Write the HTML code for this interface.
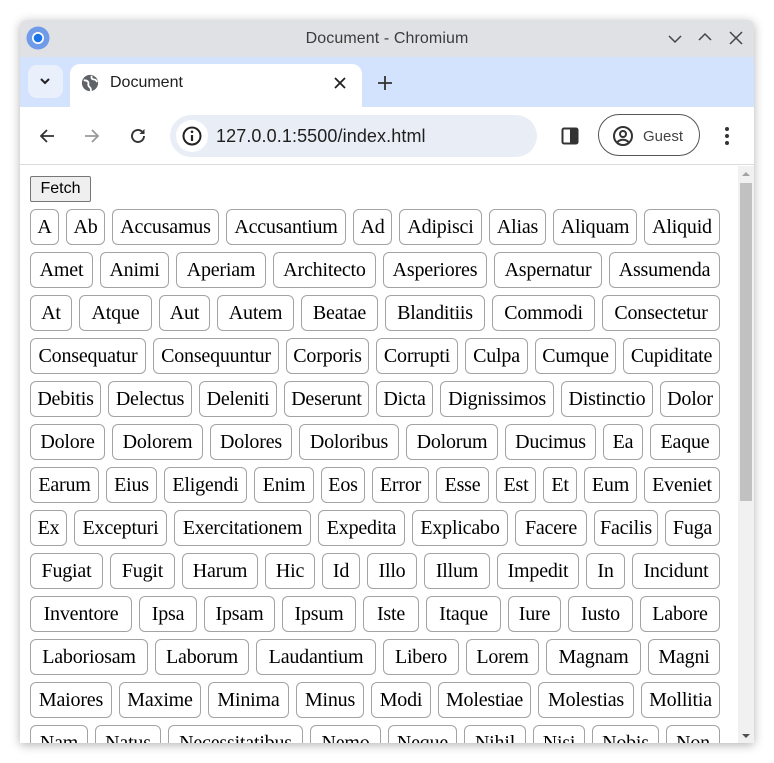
<!DOCTYPE html>
<html><head><meta charset="utf-8"><style>
*{margin:0;padding:0;box-sizing:border-box}
body{width:774px;height:763px;background:#fff;position:relative;overflow:hidden;font-family:"Liberation Sans",sans-serif}
.win{position:absolute;left:20px;top:20px;width:734px;height:723px;background:#fff;box-shadow:0 2px 10px rgba(0,0,0,.3);border-radius:6px 6px 0 0;overflow:hidden}
.title{position:absolute;left:0;top:0;width:734px;height:37px;background:#dfe1e5}
.tabs{position:absolute;left:0;top:37px;width:734px;height:50px;background:#d3e3fd}
.toolbar{position:absolute;left:0;top:87px;width:734px;height:58px;background:#fff;border-radius:8px 8px 0 0;border-bottom:1px solid #dadce0}
.content{position:absolute;left:0;top:146px;width:734px;height:577px;overflow:hidden;background:#fff}
.b{position:absolute;height:36px;border:1px solid #a3a3a3;border-radius:6px;background:#fff;font-family:"Liberation Serif",serif;font-size:20px;color:#000;display:flex;align-items:center;justify-content:center;white-space:nowrap;letter-spacing:-.2px}
.r{position:absolute;left:0;width:720px;height:36px}
</style></head><body>
<div class="win">
 <div class="title">
  <svg style="position:absolute;left:6px;top:6px" width="24" height="24" viewBox="0 0 24 24"><circle cx="12" cy="12" r="11.5" fill="#6f9be8"/><circle cx="12" cy="12" r="6" fill="#fff"/><circle cx="12" cy="12" r="4.3" fill="#1a73e8"/></svg>
  <div style="position:absolute;left:0;width:734px;top:10px;text-align:center;font-size:16px;color:#3c3c3c;letter-spacing:.1px">Document - Chromium</div>
  <svg style="position:absolute;left:648px;top:12px" width="14" height="14" viewBox="0 0 14 14"><path d="M1 4l6 6 6-6" stroke="#444" stroke-width="1.5" fill="none"/></svg>
  <svg style="position:absolute;left:678px;top:10px" width="14" height="14" viewBox="0 0 14 14"><path d="M1 10l6-6 6 6" stroke="#444" stroke-width="1.5" fill="none"/></svg>
  <svg style="position:absolute;left:709px;top:11px" width="14" height="14" viewBox="0 0 14 14"><path d="M1 1l12 12M13 1L1 13" stroke="#444" stroke-width="1.5" fill="none"/></svg>
 </div>
 <div class="tabs">
  <div style="position:absolute;left:8px;top:8px;width:35px;height:33px;background:#e9effb;border-radius:9px"></div>
  <svg style="position:absolute;left:19px;top:19px" width="12" height="10" viewBox="0 0 12 10"><path d="M2 3l4 4 4-4" stroke="#222" stroke-width="2" fill="none"/></svg>
  <div style="position:absolute;left:50px;top:7px;width:292px;height:50px;background:#fff;border-radius:10px 10px 0 0"></div>
  <svg style="position:absolute;left:61px;top:17px" width="18" height="18" viewBox="0 0 20 20"><circle cx="10" cy="10" r="9" fill="#5f6368"/><path d="M3 7c2 0 4 0 5 2s-1 3 1 5 2 2 2 5M12 2c-1 2 0 4 2 4s3 1 4 3" stroke="#fff" stroke-width="2" fill="none"/></svg>
  <div style="position:absolute;left:90px;top:17px;font-size:16px;color:#1f1f1f">Document</div>
  <svg style="position:absolute;left:314px;top:20px" width="12" height="12" viewBox="0 0 12 12"><path d="M1 1l10 10M11 1L1 11" stroke="#222" stroke-width="1.8"/></svg>
  <svg style="position:absolute;left:357px;top:18px" width="16" height="16" viewBox="0 0 16 16"><path d="M8 1v14M1 8h14" stroke="#333" stroke-width="1.8"/></svg>
 </div>
 <div class="toolbar">
  <svg style="position:absolute;left:18px;top:20px" width="18" height="18" viewBox="0 0 18 18"><path d="M16 9H3M9 3L3 9l6 6" stroke="#333" stroke-width="1.8" fill="none"/></svg>
  <svg style="position:absolute;left:63px;top:20px" width="18" height="18" viewBox="0 0 18 18"><path d="M2 9h13M9 3l6 6-6 6" stroke="#999" stroke-width="1.8" fill="none"/></svg>
  <svg style="position:absolute;left:108px;top:19px" width="20" height="20" viewBox="0 0 20 20"><path d="M16 10a6 6 0 1 1-2-4.5" stroke="#333" stroke-width="1.9" fill="none"/><path d="M16.5 3v5h-5z" fill="#333"/></svg>
  <div style="position:absolute;left:150px;top:8px;width:367px;height:42px;background:#e9eef6;border-radius:21px"></div>
  <div style="position:absolute;left:156px;top:13px;width:32px;height:32px;background:#fff;border-radius:16px"></div>
  <svg style="position:absolute;left:161px;top:18px" width="22" height="22" viewBox="0 0 22 22"><circle cx="11" cy="11" r="8.5" stroke="#222" stroke-width="2" fill="none"/><path d="M11 10v6" stroke="#222" stroke-width="2.2"/><circle cx="11" cy="6.8" r="1.3" fill="#222"/></svg>
  <div style="position:absolute;left:196px;top:19px;font-size:18px;color:#1f1f1f;letter-spacing:.1px">127.0.0.1:5500/index.html</div>
  <svg style="position:absolute;left:541px;top:20px" width="18" height="18" viewBox="0 0 18 18"><rect x="1.5" y="1.5" width="15" height="15" rx="1.5" stroke="#333" stroke-width="2" fill="none"/><rect x="9" y="1.5" width="7.5" height="15" fill="#333"/></svg>
  <div style="position:absolute;left:578px;top:7px;width:102px;height:42px;border:1px solid #555;border-radius:21px"></div>
  <svg style="position:absolute;left:592px;top:18px" width="22" height="22" viewBox="0 0 22 22"><circle cx="11" cy="11" r="9" stroke="#333" stroke-width="2" fill="none"/><circle cx="11" cy="9" r="3" stroke="#333" stroke-width="2" fill="none"/><path d="M5.5 17c3-3 8-3 11 0" stroke="#333" stroke-width="2" fill="none"/></svg>
  <div style="position:absolute;left:623px;top:21px;font-size:15px;color:#444">Guest</div>
  <svg style="position:absolute;left:704px;top:19px" width="6" height="20" viewBox="0 0 6 20"><circle cx="3" cy="3" r="2" fill="#333"/><circle cx="3" cy="10" r="2" fill="#333"/><circle cx="3" cy="17" r="2" fill="#333"/></svg>
 </div>
 <div class="content">
  <div style="position:absolute;right:0;top:0;width:16px;height:577px;background:#f1f1f1"></div>
  <div style="position:absolute;right:2px;top:17px;width:12px;height:318px;background:#c1c1c1"></div>
  <svg style="position:absolute;right:4px;top:5px" width="8" height="6"><path d="M0 5l4-4 4 4z" fill="#a3a3a3"/></svg>
  <svg style="position:absolute;right:4px;top:567px" width="8" height="6"><path d="M0 1l4 4 4-4z" fill="#505050"/></svg>
  <div style="position:absolute;left:10px;top:10px;width:61px;height:26px;background:#efefef;border:1px solid #767676;border-radius:2px;font-size:16px;display:flex;align-items:center;justify-content:center">Fetch</div>
  <div style="position:absolute;left:-20px;top:-166px">
<div class="r" style="top:209px"><div class="b" style="left:30px;width:29px">A</div><div class="b" style="left:66px;width:39px">Ab</div><div class="b" style="left:112px;width:107px">Accusamus</div><div class="b" style="left:226px;width:120px">Accusantium</div><div class="b" style="left:353px;width:39px">Ad</div><div class="b" style="left:399px;width:83px">Adipisci</div><div class="b" style="left:489px;width:57px">Alias</div><div class="b" style="left:553px;width:84px">Aliquam</div><div class="b" style="left:644px;width:76px">Aliquid</div></div>
<div class="r" style="top:252px"><div class="b" style="left:30px;width:63px">Amet</div><div class="b" style="left:100px;width:69px">Animi</div><div class="b" style="left:176px;width:90px">Aperiam</div><div class="b" style="left:273px;width:103px">Architecto</div><div class="b" style="left:383px;width:104px">Asperiores</div><div class="b" style="left:494px;width:108px">Aspernatur</div><div class="b" style="left:609px;width:111px">Assumenda</div></div>
<div class="r" style="top:295px"><div class="b" style="left:30px;width:42px">At</div><div class="b" style="left:79px;width:73px">Atque</div><div class="b" style="left:159px;width:51px">Aut</div><div class="b" style="left:217px;width:77px">Autem</div><div class="b" style="left:301px;width:77px">Beatae</div><div class="b" style="left:385px;width:100px">Blanditiis</div><div class="b" style="left:492px;width:103px">Commodi</div><div class="b" style="left:602px;width:118px">Consectetur</div></div>
<div class="r" style="top:338px"><div class="b" style="left:30px;width:116px">Consequatur</div><div class="b" style="left:153px;width:126px">Consequuntur</div><div class="b" style="left:286px;width:83px">Corporis</div><div class="b" style="left:376px;width:82px">Corrupti</div><div class="b" style="left:465px;width:63px">Culpa</div><div class="b" style="left:535px;width:81px">Cumque</div><div class="b" style="left:623px;width:97px">Cupiditate</div></div>
<div class="r" style="top:381px"><div class="b" style="left:30px;width:71px">Debitis</div><div class="b" style="left:108px;width:84px">Delectus</div><div class="b" style="left:199px;width:78px">Deleniti</div><div class="b" style="left:284px;width:85px">Deserunt</div><div class="b" style="left:376px;width:57px">Dicta</div><div class="b" style="left:440px;width:114px">Dignissimos</div><div class="b" style="left:561px;width:92px">Distinctio</div><div class="b" style="left:660px;width:60px">Dolor</div></div>
<div class="r" style="top:424px"><div class="b" style="left:30px;width:75px">Dolore</div><div class="b" style="left:112px;width:91px">Dolorem</div><div class="b" style="left:210px;width:82px">Dolores</div><div class="b" style="left:299px;width:100px">Doloribus</div><div class="b" style="left:406px;width:92px">Dolorum</div><div class="b" style="left:505px;width:91px">Ducimus</div><div class="b" style="left:603px;width:40px">Ea</div><div class="b" style="left:650px;width:70px">Eaque</div></div>
<div class="r" style="top:467px"><div class="b" style="left:30px;width:69px">Earum</div><div class="b" style="left:106px;width:51px">Eius</div><div class="b" style="left:164px;width:83px">Eligendi</div><div class="b" style="left:254px;width:60px">Enim</div><div class="b" style="left:321px;width:44px">Eos</div><div class="b" style="left:372px;width:57px">Error</div><div class="b" style="left:436px;width:53px">Esse</div><div class="b" style="left:496px;width:40px">Est</div><div class="b" style="left:543px;width:34px">Et</div><div class="b" style="left:584px;width:53px">Eum</div><div class="b" style="left:644px;width:76px">Eveniet</div></div>
<div class="r" style="top:510px"><div class="b" style="left:30px;width:37px">Ex</div><div class="b" style="left:74px;width:93px">Excepturi</div><div class="b" style="left:174px;width:137px">Exercitationem</div><div class="b" style="left:318px;width:87px">Expedita</div><div class="b" style="left:412px;width:96px">Explicabo</div><div class="b" style="left:515px;width:72px">Facere</div><div class="b" style="left:594px;width:64px">Facilis</div><div class="b" style="left:665px;width:55px">Fuga</div></div>
<div class="r" style="top:553px"><div class="b" style="left:30px;width:73px">Fugiat</div><div class="b" style="left:110px;width:65px">Fugit</div><div class="b" style="left:182px;width:76px">Harum</div><div class="b" style="left:265px;width:50px">Hic</div><div class="b" style="left:322px;width:38px">Id</div><div class="b" style="left:367px;width:50px">Illo</div><div class="b" style="left:424px;width:66px">Illum</div><div class="b" style="left:497px;width:82px">Impedit</div><div class="b" style="left:586px;width:39px">In</div><div class="b" style="left:632px;width:88px">Incidunt</div></div>
<div class="r" style="top:596px"><div class="b" style="left:30px;width:102px">Inventore</div><div class="b" style="left:139px;width:58px">Ipsa</div><div class="b" style="left:204px;width:71px">Ipsam</div><div class="b" style="left:282px;width:74px">Ipsum</div><div class="b" style="left:363px;width:56px">Iste</div><div class="b" style="left:426px;width:75px">Itaque</div><div class="b" style="left:508px;width:53px">Iure</div><div class="b" style="left:568px;width:65px">Iusto</div><div class="b" style="left:640px;width:80px">Labore</div></div>
<div class="r" style="top:639px"><div class="b" style="left:30px;width:118px">Laboriosam</div><div class="b" style="left:155px;width:94px">Laborum</div><div class="b" style="left:256px;width:120px">Laudantium</div><div class="b" style="left:383px;width:76px">Libero</div><div class="b" style="left:466px;width:73px">Lorem</div><div class="b" style="left:546px;width:95px">Magnam</div><div class="b" style="left:648px;width:72px">Magni</div></div>
<div class="r" style="top:682px"><div class="b" style="left:30px;width:82px">Maiores</div><div class="b" style="left:119px;width:82px">Maxime</div><div class="b" style="left:208px;width:81px">Minima</div><div class="b" style="left:296px;width:68px">Minus</div><div class="b" style="left:371px;width:60px">Modi</div><div class="b" style="left:438px;width:93px">Molestiae</div><div class="b" style="left:538px;width:96px">Molestias</div><div class="b" style="left:641px;width:79px">Mollitia</div></div>
<div class="r" style="top:725px"><div class="b" style="left:30px;width:58px">Nam</div><div class="b" style="left:95px;width:66px">Natus</div><div class="b" style="left:168px;width:135px">Necessitatibus</div><div class="b" style="left:310px;width:71px">Nemo</div><div class="b" style="left:388px;width:69px">Neque</div><div class="b" style="left:464px;width:62px">Nihil</div><div class="b" style="left:533px;width:52px">Nisi</div><div class="b" style="left:592px;width:67px">Nobis</div><div class="b" style="left:666px;width:54px">Non</div></div>
  </div>
 </div>
</div>
</body></html>
